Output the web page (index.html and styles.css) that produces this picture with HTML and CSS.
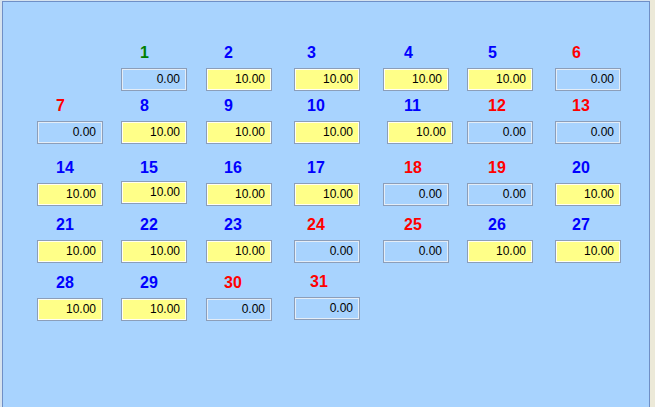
FILE: index.html
```html
<!DOCTYPE html>
<html>
<head>
<meta charset="utf-8" />
<title>month</title>
<link rel="stylesheet" href="styles.css">
</head>
<body>
<div class="frame">
    <div class="panel">
        <div class="month">
            <div class="day first"><span class="num green">1</span><span class="val">0.00</span></div>
            <div class="day"><span class="num blue">2</span><span class="val on">10.00</span></div>
            <div class="day"><span class="num blue">3</span><span class="val on">10.00</span></div>
            <div class="day"><span class="num blue">4</span><span class="val on">10.00</span></div>
            <div class="day"><span class="num blue">5</span><span class="val on">10.00</span></div>
            <div class="day"><span class="num red">6</span><span class="val">0.00</span></div>

            <div class="day"><span class="num red">7</span><span class="val">0.00</span></div>
            <div class="day"><span class="num blue">8</span><span class="val on">10.00</span></div>
            <div class="day"><span class="num blue">9</span><span class="val on">10.00</span></div>
            <div class="day"><span class="num blue">10</span><span class="val on">10.00</span></div>
            <div class="day"><span class="num blue">11</span><span class="val on nudge-right">10.00</span></div>
            <div class="day"><span class="num red">12</span><span class="val">0.00</span></div>
            <div class="day"><span class="num red">13</span><span class="val">0.00</span></div>

            <div class="day"><span class="num blue">14</span><span class="val on">10.00</span></div>
            <div class="day"><span class="num blue">15</span><span class="val on nudge-up">10.00</span></div>
            <div class="day"><span class="num blue">16</span><span class="val on">10.00</span></div>
            <div class="day"><span class="num blue">17</span><span class="val on">10.00</span></div>
            <div class="day"><span class="num red">18</span><span class="val">0.00</span></div>
            <div class="day"><span class="num red">19</span><span class="val">0.00</span></div>
            <div class="day"><span class="num blue">20</span><span class="val on">10.00</span></div>

            <div class="day"><span class="num blue">21</span><span class="val on">10.00</span></div>
            <div class="day"><span class="num blue">22</span><span class="val on">10.00</span></div>
            <div class="day"><span class="num blue">23</span><span class="val on">10.00</span></div>
            <div class="day"><span class="num red">24</span><span class="val">0.00</span></div>
            <div class="day"><span class="num red">25</span><span class="val">0.00</span></div>
            <div class="day"><span class="num blue">26</span><span class="val on">10.00</span></div>
            <div class="day"><span class="num blue">27</span><span class="val on">10.00</span></div>

            <div class="day"><span class="num blue">28</span><span class="val on">10.00</span></div>
            <div class="day"><span class="num blue">29</span><span class="val on">10.00</span></div>
            <div class="day"><span class="num red">30</span><span class="val">0.00</span></div>
            <div class="day lifted"><span class="num red">31</span><span class="val">0.00</span></div>
        </div>
    </div>
</div>
</body>
</html>
```

FILE: styles.css
```css
html,body{margin:0;padding:0;overflow:hidden;}
body{background:#ece9d8;font-family:"Liberation Sans",Arial,sans-serif;}
.frame{height:407px;padding:1px 0 0 2px;background:#d6e2ee;width:648px;}
.panel{width:648px;height:430px;box-sizing:border-box;border:1px solid #6f8fc6;background:#a8d3fe;padding:42px 0 0 34px;}

.month{display:grid;grid-template-columns:84px 85px 88px 89px 84px 88px 66px;grid-template-rows:53px 62px 57px 58px 47px;}
.day{display:flex;flex-direction:column;align-items:flex-start;}
.day.first{grid-column-start:2;}

.num{display:block;font-size:16px;font-weight:bold;line-height:18px;height:18px;margin:0 0 6px 19px;}
.green{color:#008000;}
.blue{color:#0000ff;}
.red{color:#ff0000;}

/* label offsets per weekday column */
.day:nth-child(7n+2) .num{margin-left:18px;}
.day:nth-child(7n+3) .num{margin-left:13px;}
.day:nth-child(7n+4) .num{margin-left:21px;}
.day:nth-child(7n+5) .num{margin-left:21px;}
.day:nth-child(7n+6) .num{margin-left:17px;}

.val{display:block;box-sizing:border-box;width:66px;height:23px;border:1px solid #8c9eb9;box-shadow:inset 0 0 0 1px #e4edf7;background:#a8d3fe;font-size:12px;line-height:21px;text-align:right;padding-right:6px;color:#000;}
.val.on{background:#ffff88;box-shadow:inset 0 0 0 1px #fffff4;}
.nudge-right{margin-left:4px;}
.nudge-up{margin-top:-2px;}
.day.lifted{margin-top:-1px;}
.day.lifted .num{margin-left:16px;}
```
